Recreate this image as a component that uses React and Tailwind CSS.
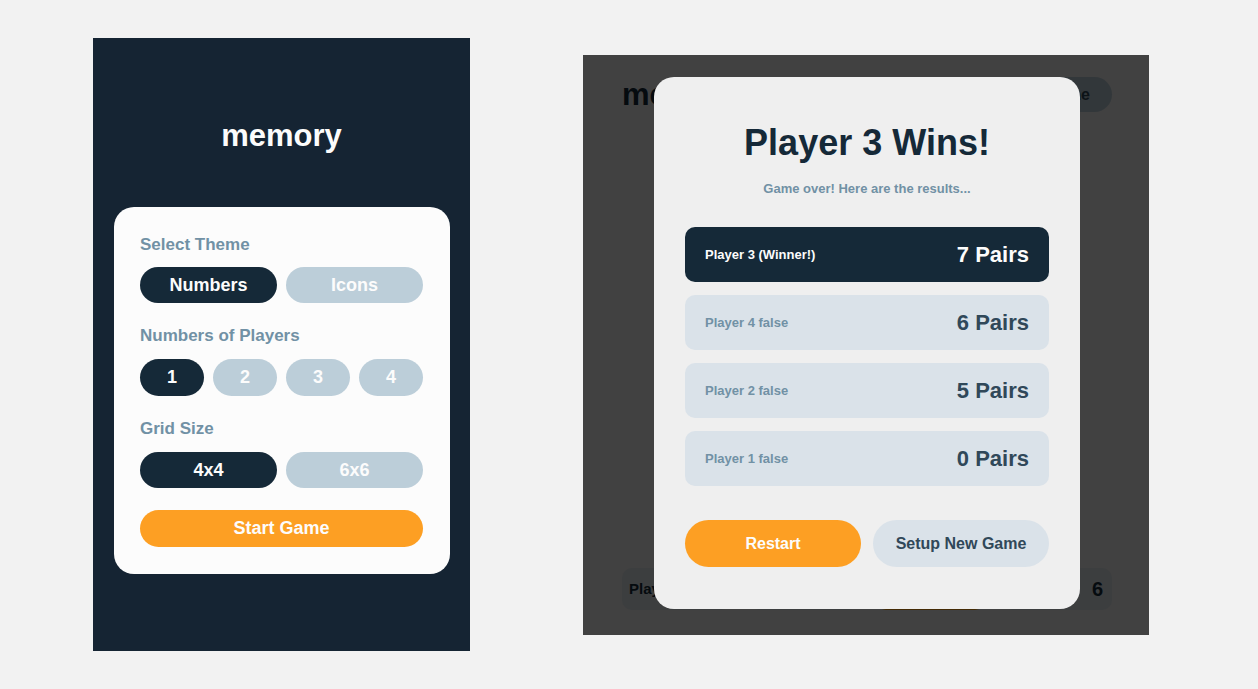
const font = "font-['Liberation_Sans',Arial,sans-serif]"

const results = [
  { name: 'Player 3 (Winner!)', pairs: 7, win: true },
  { name: 'Player 4 false', pairs: 6 },
  { name: 'Player 2 false', pairs: 5 },
  { name: 'Player 1 false', pairs: 0 },
]

const players = [
  { name: 'Player 1', score: 0 },
  { name: 'Player 2', score: 5 },
  { name: 'Player 3', score: 7, active: true },
  { name: 'Player 4', score: 6 },
]

function Pill({ on, h = 'h-[36px]', children }) {
  return (
    <button className={`${h} flex-1 rounded-full text-[18px] font-bold text-[#fcfcfc] ${on ? 'bg-[#152938]' : 'bg-[#bcced9]'}`}>
      {children}
    </button>
  )
}

function Setup() {
  return (
    <div className="ml-[93px] mt-[38px] h-[613px] w-[377px] shrink-0 bg-[#152433] px-[21px] pt-[80px]">
      <h1 className="text-center text-[31px] font-bold leading-[36px] text-[#fcfcfc]">memory</h1>
      <div className="mt-[53px] w-[336px] rounded-[20px] bg-[#fcfcfc] pb-[27px] pl-[26px] pr-[27px] pt-[28px]">
        <p className="text-[17px] font-bold leading-[20px] text-[#7191a5]">Select Theme</p>
        <div className="mt-[12px] flex gap-[9px]">
          <Pill on>Numbers</Pill>
          <Pill>Icons</Pill>
        </div>
        <p className="mt-[23px] text-[17px] font-bold leading-[20px] text-[#7191a5]">Numbers of Players</p>
        <div className="mt-[13px] flex gap-[9px]">
          <Pill on h="h-[37px]">1</Pill>
          <Pill h="h-[37px]">2</Pill>
          <Pill h="h-[37px]">3</Pill>
          <Pill h="h-[37px]">4</Pill>
        </div>
        <p className="mt-[23px] text-[17px] font-bold leading-[20px] text-[#7191a5]">Grid Size</p>
        <div className="mt-[13px] flex gap-[9px]">
          <Pill on>4x4</Pill>
          <Pill>6x6</Pill>
        </div>
        <button className="mt-[22px] h-[37px] w-full rounded-full bg-[#fd9f23] text-[18px] font-bold text-[#fcfcfc]">Start Game</button>
      </div>
    </div>
  )
}

function GameOver() {
  return (
    <div className="relative ml-[113px] mt-[55px] h-[580px] w-[566px] shrink-0 overflow-hidden bg-[#f2f2f2]">
      {/* game board behind the dialog */}
      <div className="flex h-full flex-col justify-between pb-[25px] pl-[39px] pr-[37px] pt-[22px]">
        <div className="flex h-[35px] items-center justify-between">
          <span className="text-[31px] font-bold leading-[35px] text-[#152938]">memory</span>
          <div className="flex gap-[25px]">
            <button className="h-[35px] w-[78px] rounded-full bg-[#fda214] text-[16px] font-bold text-[#fcfcfc]">Restart</button>
            <button className="h-[35px] rounded-full bg-[#bcced9] px-[22px] text-[16px] font-bold text-[#304859]">New Game</button>
          </div>
        </div>
        <div className="flex gap-[18px]">
          {players.map((p) => (
            <div key={p.name} className={`flex h-[42px] flex-1 items-center justify-between rounded-[10px] pl-[7px] pr-[9px] ${p.active ? 'bg-[#fda214] text-[#fcfcfc]' : 'bg-[#dfe7ec] text-[#152938]'}`}>
              <span className="text-[15px] font-bold">{p.name}</span>
              <span className="text-[20px] font-bold">{p.score}</span>
            </div>
          ))}
        </div>
      </div>

      <div className="absolute inset-0 bg-black/[0.735] pl-[71px] pt-[22px]">
        <div className="h-[532px] w-[426px] rounded-[20px] bg-[#efefef] px-[31px] pt-[44px]">
          <h2 className="text-center text-[36px] font-bold leading-[44px] text-[#152938]">Player 3 Wins!</h2>
          <p className="mt-[16px] text-center text-[13px] font-bold leading-[16px] text-[#7191a5]">Game over! Here are the results...</p>
          <div className="mt-[30px] flex flex-col gap-[13px]">
            {results.map((r) => (
              <div key={r.name} className={`flex h-[55px] items-center justify-between rounded-[10px] px-[20px] ${r.win ? 'bg-[#152938]' : 'bg-[#dae2e9]'}`}>
                <span className={`text-[13px] font-bold ${r.win ? 'text-[#fcfcfc]' : 'text-[#7191a5]'}`}>{r.name}</span>
                <span className={`text-[22px] font-bold ${r.win ? 'text-[#fcfcfc]' : 'text-[#304859]'}`}>{r.pairs} Pairs</span>
              </div>
            ))}
          </div>
          <div className="mt-[34px] flex gap-[12px]">
            <button className="h-[47px] flex-1 rounded-full bg-[#fd9f23] text-[16px] font-bold text-[#fcfcfc]">Restart</button>
            <button className="h-[47px] flex-1 rounded-full bg-[#dae2e9] text-[16px] font-bold text-[#304859]">Setup New Game</button>
          </div>
        </div>
      </div>
    </div>
  )
}

export default function App() {
  return (
    <div className={`${font} flex h-[689px] w-[1258px] items-start bg-[#f2f2f2]`}>
      <Setup />
      <GameOver />
    </div>
  )
}
